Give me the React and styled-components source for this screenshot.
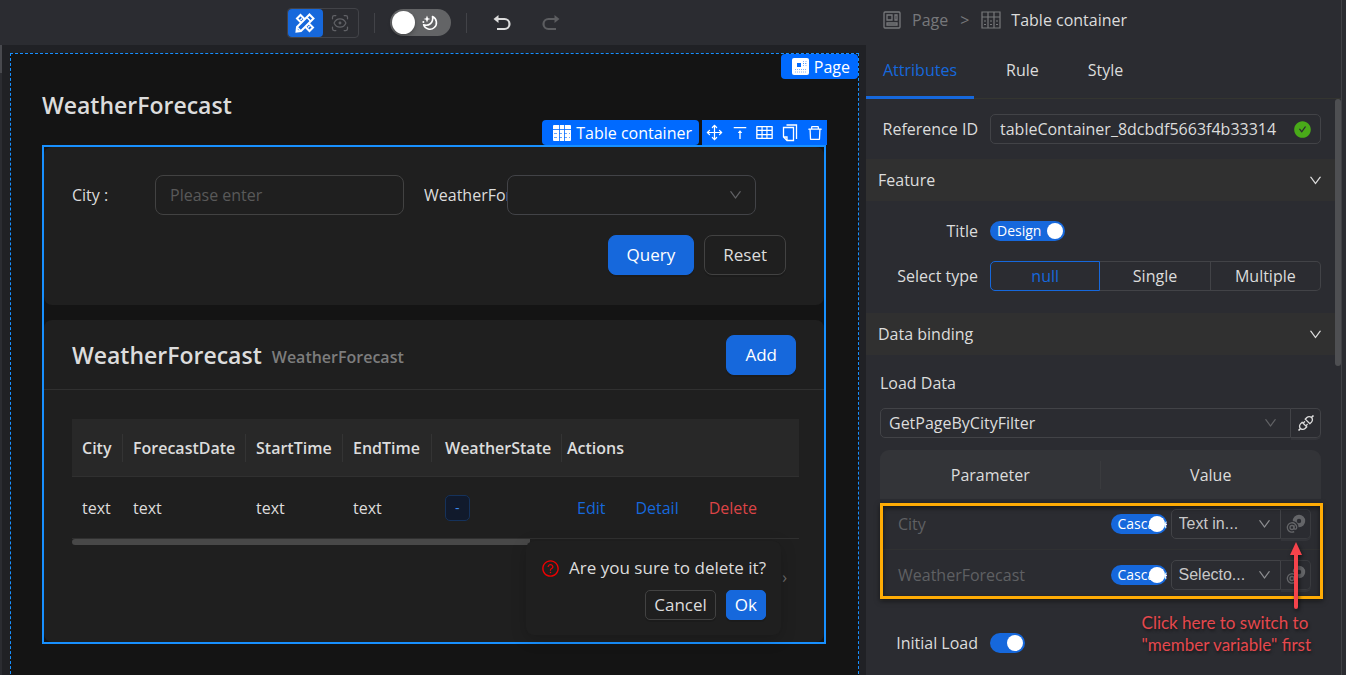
import React, { useState } from "react";
import styled, { createGlobalStyle } from "styled-components";
import { Move, ScanEye } from "lucide-react";
import {
  AiFillCheckCircle,
  AiOutlineApi,
  AiOutlineDelete,
  AiOutlineDown,
  AiOutlineQuestionCircle,
  AiOutlineTable,
  AiOutlineVerticalAlignTop,
} from "react-icons/ai";

const columns = [
  { name: "City", width: 51 },
  { name: "ForecastDate", width: 123 },
  { name: "StartTime", width: 97 },
  { name: "EndTime", width: 89 },
  { name: "WeatherState", width: 130 },
];

const params = [
  { name: "City", source: "Text in..." },
  { name: "WeatherForecast", source: "Selecto..." },
];

function DesignIcon() {
  return (
    <svg width="20" height="20" viewBox="0 0 20 20" fill="none" stroke="#fff" strokeWidth="2">
      <path d="M2 5.5 5.5 2l12.5 12.5-3.5 3.5z" />
      <path d="M7 5.5 5.5 7M9.5 8 8.5 9M12 10.5 11 11.5M14.5 13 13 14.5" strokeWidth="1.3" />
      <path d="M14.5 1.5 18.5 5.5 6 18l-4.5.5L2 14z" fill="#1668dc" />
      <path d="m12 4.5 3.5 3.5M2 14l4 4" strokeWidth="1.5" />
      <path d="M1 19v-4l4 4z" fill="#fff" strokeWidth="0" />
    </svg>
  );
}

function MoonIcon() {
  return (
    <svg width="16" height="16" viewBox="0 0 16 16" fill="none" stroke="#fff" strokeWidth="1.6">
      <path d="M10.5 1.6A6.6 6.6 0 1 1 1.6 9.8C7 11.5 11.6 7.5 10.5 1.6z" strokeLinejoin="round" />
      <path d="M5 .5 6 3.200 8.500 4 6 4.800 5 7.500 4 4.800 1.500 4 4 3.200z" fill="#fff" stroke="none" />
      <circle cx="1.4" cy="7" r="1" fill="#fff" stroke="none" />
    </svg>
  );
}

function UndoIcon() {
  return (
    <svg width="18" height="16" viewBox="0 0 18 16" fill="none" stroke="currentColor" strokeWidth="2.2">
      <path d="M4 4h7.5a4.8 4.8 0 0 1 0 10H4" />
      <path d="M.5 4 5.5 0v8z" fill="currentColor" stroke="none" />
    </svg>
  );
}

function PageIcon({ solid }) {
  if (solid) {
    return (
      <svg width="17" height="17" viewBox="0 0 17 17">
        <rect width="17" height="17" rx="2" fill="#fff" />
        <path d="M5 5h4v4H5z" fill="#006aff" />
        <path d="M11.500 3v6M14 3v6M3 11.500h11M3 14h11M11 5.500h3" stroke="#006aff" strokeOpacity="0.5" strokeDasharray="1 1" />
      </svg>
    );
  }
  return (
    <svg width="18" height="18" viewBox="0 0 18 18" fill="none" stroke="currentColor" strokeWidth="1.3">
      <rect x="1" y="1" width="16" height="16" rx="1" />
      <path d="M4 4h5v5H4zM12 4h2v5h-2zM4 12h10v2H4z" />
    </svg>
  );
}

function ContainerIcon({ solid }) {
  if (solid) {
    return (
      <svg width="18" height="16" viewBox="0 0 18 16">
        <rect width="18" height="16" rx="1" fill="#fff" />
        <path d="M0 4.500h18M6.500 0v16M11.500 0v16" stroke="#006aff" strokeOpacity="0.8" />
        <path d="M1 8.500h16M1 12.500h16" stroke="#006aff" strokeOpacity="0.6" strokeDasharray="3 2" />
      </svg>
    );
  }
  return (
    <svg width="20" height="18" viewBox="0 0 20 18" fill="none" stroke="currentColor" strokeWidth="1.2">
      <path d="M1 1h18v16H1zM1 6h18M7 1v16M13 1v16" />
      <path d="M3 10h2M3 13.500h2M9 10h2M9 13.500h2M15 10h2M15 13.500h2" />
    </svg>
  );
}

function CopyIcon() {
  return (
    <svg width="16" height="18" viewBox="0 0 16 18" fill="none" stroke="#fff" strokeWidth="1.3">
      <path d="M4.500 1h10v14" />
      <path d="M1.500 3.500h10v13H5L1.500 13zM1.500 13H5v3.500" />
    </svg>
  );
}

function BindIcon() {
  return (
    <svg width="20" height="20" viewBox="0 0 20 20" fill="none" stroke="currentColor">
      <circle cx="13" cy="7" r="4.2" strokeWidth="4" />
      <circle cx="6.500" cy="13" r="6" fill="#2b2c31" stroke="none" />
      <circle cx="6" cy="13.500" r="2" strokeWidth="1.3" />
      <path d="M8 11.300v2.700c0 1.800 2.700 1.600 2.700-.5A4.700 4.700 0 1 0 8.200 17.600" strokeWidth="1.3" />
    </svg>
  );
}

function Toggle({ label, text, wide }) {
  const [on, setOn] = useState(true);
  return (
    <Switch $wide={wide} $on={on}>
      <input type="checkbox" role="switch" aria-label={label} checked={on} onChange={() => setOn(!on)} />
      {text && <SwitchText>{text}</SwitchText>}
      <Knob />
    </Switch>
  );
}

function Toolbar() {
  return (
    <Bar>
      <ModeGroup>
        <ModeButton $active aria-label="Design">
          <DesignIcon />
        </ModeButton>
        <ModeButton aria-label="Preview">
          <ScanEye size={20} strokeWidth={1.5} />
        </ModeButton>
      </ModeGroup>
      <Divider />
      <ThemeButton aria-label="Dark theme">
        <span />
        <MoonIcon />
      </ThemeButton>
      <Divider />
      <HistoryButton aria-label="Undo">
        <UndoIcon />
      </HistoryButton>
      <HistoryButton $flip disabled aria-label="Redo">
        <UndoIcon />
      </HistoryButton>
    </Bar>
  );
}

function FilterCard() {
  return (
    <Card>
      <Filters>
        <Field>
          <label htmlFor="city">City :</label>
          <input id="city" placeholder="Please enter" />
        </Field>
        <Field>
          <label htmlFor="state">WeatherForecast</label>
          <SelectBox $large>
            <select id="state" />
            <AiOutlineDown size={15} />
          </SelectBox>
        </Field>
      </Filters>
      <FilterActions>
        <Button $primary>Query</Button>
        <Button>Reset</Button>
      </FilterActions>
    </Card>
  );
}

function ListCard() {
  return (
    <Card $list>
      <CardHead>
        <Heading>WeatherForecast</Heading>
        <SubHeading>WeatherForecast</SubHeading>
        <Button $primary>Add</Button>
      </CardHead>
      <CardBody>
        <DataTable>
          <colgroup>
            {columns.map((c) => (
              <col key={c.name} width={c.width} />
            ))}
            <col />
          </colgroup>
          <thead>
            <tr>
              {columns.map((c) => (
                <th key={c.name}>{c.name}</th>
              ))}
              <th>Actions</th>
            </tr>
          </thead>
          <tbody>
            <tr>
              <td>text</td>
              <td>text</td>
              <td>text</td>
              <td>text</td>
              <td>
                <Tag>-</Tag>
              </td>
              <td>
                <RowActions>
                  <a href="#edit">Edit</a>
                  <a href="#detail">Detail</a>
                  <DangerLink href="#delete">Delete</DangerLink>
                </RowActions>
              </td>
            </tr>
          </tbody>
        </DataTable>
        <ScrollThumb />
        <Pager>
          <button aria-label="Next page">›</button>
        </Pager>
      </CardBody>
      <Popconfirm role="dialog">
        <p>
          <AiOutlineQuestionCircle size={19} color="#f00000" />
          Are you sure to delete it?
        </p>
        <PopActions>
          <SmallButton>Cancel</SmallButton>
          <SmallButton $primary>Ok</SmallButton>
        </PopActions>
      </Popconfirm>
    </Card>
  );
}

function Canvas() {
  return (
    <CanvasArea>
      <Page>
        <PageTag>
          <PageIcon solid />
          Page
        </PageTag>
        <PageTitle>WeatherForecast</PageTitle>
        <Frame>
          <FrameTools>
            <FrameTag>
              <ContainerIcon solid />
              Table container
            </FrameTag>
            <FrameActions>
              <button aria-label="Move"><Move size={17} strokeWidth={1.75} /></button>
              <button aria-label="To parent"><AiOutlineVerticalAlignTop size={18} /></button>
              <button aria-label="Columns"><AiOutlineTable size={19} /></button>
              <button aria-label="Copy"><CopyIcon /></button>
              <button aria-label="Remove"><AiOutlineDelete size={18} /></button>
            </FrameActions>
          </FrameTools>
          <FilterCard />
          <ListCard />
        </Frame>
      </Page>
    </CanvasArea>
  );
}

function Panel() {
  const [type, setType] = useState("null");
  return (
    <Side>
      <Crumbs>
        <a href="#page"><PageIcon />Page</a>
        <i>&gt;</i>
        <ContainerIcon />
        <b>Table container</b>
      </Crumbs>
      <Tabs>
        <Tab $active>Attributes</Tab>
        <Tab>Rule</Tab>
        <Tab>Style</Tab>
      </Tabs>
      <PanelScroll>
        <PanelContent>
          <PropRow>
            <label htmlFor="ref">Reference ID</label>
            <RefBox>
              <input id="ref" defaultValue="tableContainer_8dcbdf5663f4b33314" />
              <AiFillCheckCircle size={19} color="#49aa19" />
            </RefBox>
          </PropRow>
          <Section>
            Feature
            <AiOutlineDown size={15} />
          </Section>
          <PropRow>
            <span>Title</span>
            <Toggle label="Title" text="Design" wide={75} />
          </PropRow>
          <PropRow>
            <span>Select type</span>
            <Radios>
              {["null", "Single", "Multiple"].map((t) => (
                <Radio key={t} $checked={t === type}>
                  <input type="radio" name="type" checked={t === type} onChange={() => setType(t)} />
                  {t}
                </Radio>
              ))}
            </Radios>
          </PropRow>
          <Section $spaced>
            Data binding
            <AiOutlineDown size={15} />
          </Section>
          <Binding>
            <label htmlFor="load">Load Data</label>
            <SourceRow>
              <SelectBox $joined>
                <select id="load">
                  <option>GetPageByCityFilter</option>
                </select>
                <AiOutlineDown size={15} />
              </SelectBox>
              <JoinedButton aria-label="Api"><AiOutlineApi size={20} /></JoinedButton>
            </SourceRow>
            <ParamArea>
              <ParamTable>
                <thead>
                  <tr>
                    <th>Parameter</th>
                    <th>Value</th>
                  </tr>
                </thead>
                <tbody>
                  {params.map((p) => (
                    <tr key={p.name}>
                      <td>{p.name}</td>
                      <td>
                        <ParamValue>
                          <Toggle label="Cascade" text="Cascade" wide={56} />
                          <SourceRow>
                            <SelectBox $small $joined>
                              <select aria-label={p.name}>
                                <option>{p.source}</option>
                              </select>
                              <AiOutlineDown size={15} />
                            </SelectBox>
                            <JoinedButton $muted aria-label="Member variable"><BindIcon /></JoinedButton>
                          </SourceRow>
                        </ParamValue>
                      </td>
                    </tr>
                  ))}
                </tbody>
              </ParamTable>
              <Highlight />
              <Arrow width="14" height="68" viewBox="0 0 14 68">
                <path d="M7 10v55" stroke="#f5434b" strokeWidth="4" strokeLinecap="round" />
                <path d="M7 0l6 13H1z" fill="#f5434b" />
              </Arrow>
              <Note>
                Click here to switch to
                <br />
                "member variable" first
              </Note>
            </ParamArea>
          </Binding>
          <PropRow>
            <span>Initial Load</span>
            <Toggle label="Initial Load" wide={35} />
          </PropRow>
        </PanelContent>
        <PanelThumb />
      </PanelScroll>
    </Side>
  );
}

function App() {
  return (
    <>
      <GlobalStyle />
      <Shell>
        <Main>
          <Toolbar />
          <Canvas />
        </Main>
        <Panel />
      </Shell>
    </>
  );
}
export default App;

const GlobalStyle = createGlobalStyle`
  * {
    box-sizing: border-box;
  }
  body {
    margin: 0;
    background: #2b2c31;
    color: #dcdcdc;
    font-family: "Open Sans", sans-serif;
    font-size: 16px;
    line-height: 24px;
  }
  button, input, select {
    font: inherit;
    color: inherit;
    margin: 0;
  }
  button {
    display: inline-flex;
    align-items: center;
    justify-content: center;
    border: 0;
    padding: 0;
    background: none;
  }
  a {
    text-decoration: none;
    color: #1668dc;
  }
  svg {
    flex: none;
  }
`;

const Shell = styled.div`
  display: grid;
  grid-template-columns: minmax(0, 1fr) 480px;
  height: 100vh;
  overflow: hidden;
`;

const Main = styled.main`
  display: flex;
  flex-direction: column;
  min-width: 0;
`;

const Bar = styled.header`
  display: flex;
  align-items: center;
  justify-content: center;
  gap: 15px;
  height: 45px;
  flex: none;
  padding-right: 12px;
`;

const ModeGroup = styled.div`
  display: flex;
  border: 1px solid #424348;
  border-radius: 4px;
`;

const ModeButton = styled.button`
  width: 35px;
  height: 28px;
  border-radius: 4px;
  color: #606166;
  background: ${({ $active }) => ($active ? "#1668dc" : "transparent")};
`;

const Divider = styled.span`
  width: 1px;
  height: 20px;
  background: #424348;
`;

const ThemeButton = styled.button`
  width: 61px;
  height: 27px;
  padding: 0 13px 0 2px;
  justify-content: space-between;
  border-radius: 14px;
  background: #636466;
  span {
    width: 23px;
    height: 23px;
    border-radius: 50%;
    background: #fff;
    box-shadow: 0 2px 4px rgba(0, 0, 0, 0.3);
  }
`;

const HistoryButton = styled.button`
  width: 34px;
  height: 30px;
  margin-left: ${({ $flip }) => ($flip ? "0" : "3px")};
  color: ${({ $flip }) => ($flip ? "#5c5d60" : "#dcdcdc")};
  transform: ${({ $flip }) => ($flip ? "scaleX(-1)" : "none")};
`;

const CanvasArea = styled.div`
  flex: 1;
  display: flex;
  min-height: 0;
  padding: 8px 7px 0 10px;
  background:
    linear-gradient(#48494e 28px, #2b2c31 28px) left top / 2px 100% no-repeat,
    #202125;
`;

const Page = styled.section`
  position: relative;
  flex: 1;
  min-width: 0;
  padding: 35px 32px 35px 31px;
  border: 1px dashed #1890ff;
  border-bottom: 0;
  background: #141414;
`;

const PageTag = styled.div`
  position: absolute;
  top: 0;
  right: 0;
  display: flex;
  align-items: center;
  gap: 5px;
  height: 25px;
  padding: 0 8px 0 11px;
  border-radius: 4px;
  background: #006aff;
  color: #fff;
`;

const PageTitle = styled.h1`
  margin: 0 0 24px;
  font-size: 23px;
  font-weight: 600;
  line-height: 32px;
`;

const Frame = styled.div`
  position: relative;
  border: 2px solid #1890ff;
`;

const FrameTools = styled.div`
  position: absolute;
  right: -3px;
  bottom: 100%;
  display: flex;
  gap: 3px;
  margin-bottom: 2px;
`;

const FrameTag = styled.div`
  display: flex;
  align-items: center;
  gap: 5px;
  height: 25px;
  padding: 0 7px 0 11px;
  border-radius: 4px;
  background: #006aff;
  color: #fff;
`;

const FrameActions = styled.div`
  display: flex;
  height: 25px;
  background: #006aff;
  color: #fff;
  button {
    width: 25px;
  }
`;

const Card = styled.div`
  position: relative;
  margin-top: ${({ $list }) => ($list ? "15px" : "0")};
  padding: ${({ $list }) => ($list ? "0" : "28px 28px 30px")};
  border-radius: 8px;
  background: #1f1f1f;
`;

const Filters = styled.div`
  display: grid;
  grid-template-columns: 1fr 1fr;
  gap: 20px;
  padding-right: 40px;
`;

const Field = styled.div`
  display: grid;
  grid-template-columns: 83px minmax(0, 1fr);
  align-items: center;
  label {
    overflow: hidden;
    white-space: nowrap;
  }
  input {
    min-width: 0;
    height: 40px;
    padding: 0 14px;
    border: 1px solid #424242;
    border-radius: 8px;
    background: transparent;
  }
  input::placeholder {
    color: #595959;
  }
`;

const SelectBox = styled.div`
  position: relative;
  flex: 1;
  min-width: 0;
  select {
    display: block;
    appearance: none;
    width: 100%;
    height: ${({ $large }) => ($large ? "40px" : "30px")};
    padding: 0 ${({ $small }) => ($small ? "7px" : "8px")};
    border: 1px solid #424347;
    border-radius: ${({ $large, $joined }) => ($large ? "8px" : $joined ? "5px 0 0 5px" : "5px")};
    background: transparent;
    ${({ $small }) => $small && 'font-family: "Liberation Sans", sans-serif;'}
  }
  svg {
    position: absolute;
    top: 50%;
    right: ${({ $small }) => ($small ? "9px" : "13px")};
    transform: translateY(-50%);
    color: ${({ $small }) => ($small ? "#8b8c8f" : "#606164")};
    pointer-events: none;
  }
`;

const FilterActions = styled.div`
  display: flex;
  justify-content: flex-end;
  gap: 10px;
  margin-top: 20px;
  padding-right: 10px;
`;

const Button = styled.button`
  height: 40px;
  padding: 0 18px;
  border: 1px solid ${({ $primary }) => ($primary ? "#1668dc" : "#424242")};
  border-radius: 8px;
  font-size: 17px;
  background: ${({ $primary }) => ($primary ? "#1668dc" : "transparent")};
  color: ${({ $primary }) => ($primary ? "#fff" : "#dcdcdc")};
  box-shadow: 0 2px 0 rgba(0, 0, 0, 0.1);
`;

const SmallButton = styled(Button)`
  height: 30px;
  padding: 0 8px;
  border-radius: 5px;
`;

const CardHead = styled.div`
  display: flex;
  align-items: center;
  gap: 10px;
  height: 70px;
  padding: 0 28px;
  border-bottom: 1px solid #303030;
  button {
    margin-left: auto;
  }
`;

const Heading = styled.h2`
  margin: 0;
  font-size: 23px;
  font-weight: 600;
`;

const SubHeading = styled.span`
  padding-top: 5px;
  font-weight: 600;
  color: #7d7d7d;
`;

const CardBody = styled.div`
  padding: 29px 25px 53px 28px;
`;

const DataTable = styled.table`
  width: 100%;
  table-layout: fixed;
  border-collapse: separate;
  border-spacing: 0;
  text-align: left;
  th, td {
    padding: 0 10px;
    border-bottom: 1px solid #303030;
    white-space: nowrap;
  }
  th {
    height: 58px;
    font-weight: 600;
    background: linear-gradient(#343434, #343434) right center / 1px 28px no-repeat #282828;
  }
  th:nth-child(5), td:nth-child(5) {
    padding-left: 13px;
  }
  th:last-child {
    padding-left: 5px;
    background: #282828;
  }
  td {
    height: 62px;
  }
`;

const Tag = styled.span`
  display: inline-block;
  padding: 0 9px;
  border: 1px solid #15325b;
  border-radius: 5px;
  background: #111a2c;
  color: #3c89e8;
  font-size: 14px;
`;

const RowActions = styled.div`
  display: flex;
  gap: 30px;
  padding-left: 5px;
`;

const DangerLink = styled.a`
  color: #dc4446;
`;

const ScrollThumb = styled.div`
  width: 63%;
  height: 6px;
  border-radius: 3px 0 0 3px;
  background: #484848;
`;

const Pager = styled.div`
  display: flex;
  justify-content: flex-end;
  padding: 20px 12px 0 0;
  color: #6c6c6c;
`;

const Popconfirm = styled.div`
  position: absolute;
  right: 43px;
  bottom: 7px;
  padding: 15px;
  border-radius: 8px;
  background: #1f1f1f;
  box-shadow: 0 4px 16px rgba(0, 0, 0, 0.18);
  font-size: 17px;
  p {
    display: flex;
    align-items: center;
    gap: 9px;
    margin: 0 0 10px;
  }
`;

const PopActions = styled.div`
  display: flex;
  justify-content: flex-end;
  gap: 10px;
`;

const Side = styled.aside`
  display: flex;
  flex-direction: column;
  min-height: 0;
  margin-right: 4px;
  border-right: 1px solid #404145;
`;

const Crumbs = styled.nav`
  display: flex;
  align-items: center;
  height: 40px;
  padding-left: 17px;
  color: #77787b;
  a {
    display: flex;
    align-items: center;
    gap: 11px;
    color: inherit;
  }
  i {
    margin: 0 12px;
    font-style: normal;
  }
  b {
    margin-left: 10px;
    font-weight: 400;
    color: #dcdcdc;
  }
`;

const Tabs = styled.div`
  display: flex;
  gap: 15px;
  height: 59px;
  border-bottom: 1px solid #343530;
`;

const Tab = styled.button`
  height: 59px;
  padding: 0 17px;
  border-top: 3px solid transparent;
  border-bottom: 3px solid ${({ $active }) => ($active ? "#1668dc" : "transparent")};
  color: ${({ $active }) => ($active ? "#1668dc" : "#dcdcdc")};
`;

const PanelScroll = styled.div`
  display: flex;
  flex: 1;
  min-height: 0;
`;

const PanelContent = styled.div`
  flex: 1;
  min-width: 0;
`;

const PanelThumb = styled.div`
  width: 6px;
  height: 267px;
  border-radius: 3px;
  background: #4e4f52;
`;

const PropRow = styled.div`
  display: grid;
  grid-template-columns: 112px minmax(0, 1fr);
  align-items: center;
  gap: 12px;
  min-height: 30px;
  margin: 15px 14px 15px 0;
  > :first-child {
    text-align: right;
    white-space: nowrap;
  }
`;

const RefBox = styled.div`
  display: flex;
  align-items: center;
  gap: 8px;
  height: 30px;
  padding: 0 8px 0 9px;
  border: 1px solid #424347;
  border-radius: 5px;
  input {
    flex: 1;
    min-width: 0;
    padding: 0;
    border: 0;
    background: transparent;
  }
`;

const Section = styled.button`
  display: flex;
  justify-content: space-between;
  width: 100%;
  height: 42px;
  margin-top: ${({ $spaced }) => ($spaced ? "22px" : "0")};
  padding: 0 12px;
  background: #303030;
`;

const Switch = styled.label`
  position: relative;
  display: flex;
  align-items: center;
  justify-content: flex-end;
  width: ${({ $wide }) => $wide}px;
  height: 20px;
  padding: 0 2px 0 7px;
  border-radius: 10px;
  overflow: hidden;
  color: #fff;
  background: ${({ $on }) => ($on ? "#1668dc" : "#5c5d60")};
  input {
    position: absolute;
    inset: 0;
    opacity: 0;
  }
`;

const SwitchText = styled.span`
  flex: 1;
  width: 0;
  font-size: 14px;
  line-height: 20px;
`;

const Knob = styled.span`
  position: relative;
  flex: none;
  width: 16px;
  height: 16px;
  border-radius: 50%;
  background: #fff;
`;

const Radios = styled.div`
  display: grid;
  grid-template-columns: repeat(3, 1fr);
`;

const Radio = styled.label`
  position: relative;
  height: 30px;
  line-height: 28px;
  text-align: center;
  border: 1px solid ${({ $checked }) => ($checked ? "#1668dc" : "#424347")};
  color: ${({ $checked }) => ($checked ? "#1668dc" : "#dcdcdc")};
  & + & {
    border-left-width: ${({ $checked }) => ($checked ? "1px" : "0")};
  }
  &:first-child {
    border-radius: 5px 0 0 5px;
  }
  &:last-child {
    border-radius: 0 5px 5px 0;
  }
  input {
    position: absolute;
    inset: 0;
    opacity: 0;
  }
`;

const Binding = styled.div`
  padding: 16px 14px 12px;
`;

const SourceRow = styled.div`
  display: flex;
  margin-top: 13px;
`;

const JoinedButton = styled.button`
  width: 30px;
  height: 30px;
  border: 1px solid ${({ $muted }) => ($muted ? "#3a3b3f" : "#424347")};
  border-left: 0;
  border-radius: 0 5px 5px 0;
  color: ${({ $muted }) => ($muted ? "#646568" : "#dcdcdc")};
  box-shadow: 0 2px 0 rgba(255, 255, 255, 0.04);
`;

const ParamArea = styled.div`
  position: relative;
  margin-top: 12px;
`;

const ParamTable = styled.table`
  width: 100%;
  table-layout: fixed;
  border-collapse: separate;
  border-spacing: 0;
  th {
    height: 49px;
    padding: 0;
    font-weight: 400;
    background: #333438;
  }
  th:first-child {
    border-radius: 9px 0 0 0;
    background: linear-gradient(#3a3b3e, #3a3b3e) right center / 1px 28px no-repeat #333438;
  }
  th:last-child {
    border-radius: 0 9px 0 0;
  }
  td {
    height: 51px;
    padding: 0 10px;
    border-bottom: 1px solid #303132;
    color: #5f6063;
  }
  td:first-child {
    padding-left: 18px;
  }
`;

const ParamValue = styled.div`
  display: flex;
  align-items: center;
  gap: 4px;
  color: #c8c8c9;
  > div {
    flex: 1;
    min-width: 0;
    margin: 0;
  }
`;

const Highlight = styled.div`
  position: absolute;
  top: 53px;
  right: -2px;
  bottom: 2px;
  left: 0;
  border: 3px solid #ffac05;
  box-shadow: 0 2px 5px rgba(0, 0, 0, 0.5), inset 0 2px 5px rgba(0, 0, 0, 0.5);
  pointer-events: none;
`;

const Arrow = styled.svg`
  position: absolute;
  top: 92px;
  right: 18px;
  filter: drop-shadow(1px 2px 2px rgba(0, 0, 0, 0.6));
  pointer-events: none;
`;

const Note = styled.p`
  position: absolute;
  top: 100%;
  right: 10px;
  margin: 11px 0 0;
  font-family: Lato, sans-serif;
  font-size: 17px;
  line-height: 22px;
  white-space: nowrap;
  color: #e5484d;
  text-shadow: 1px 2px 3px rgba(0, 0, 0, 0.5);
`;
